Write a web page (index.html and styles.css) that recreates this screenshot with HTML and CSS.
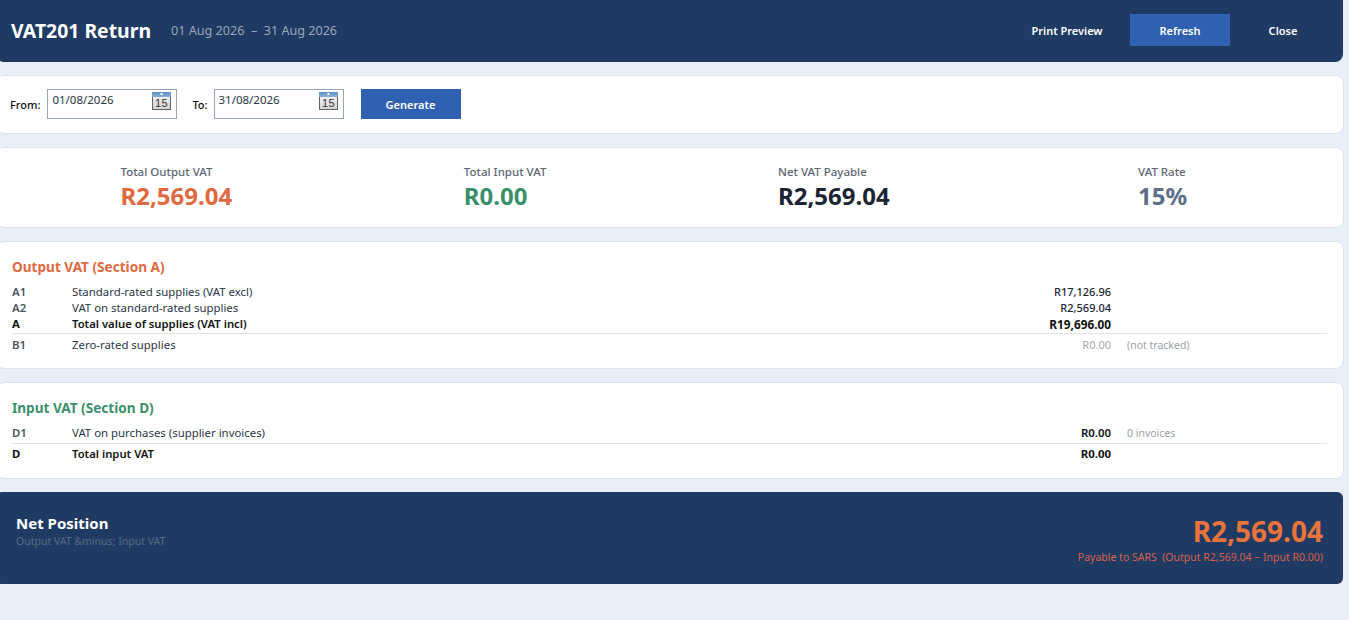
FILE: index.html
```html
<!DOCTYPE html>
<html lang="en">
<head>
<meta charset="utf-8">
<title>VAT201 Return</title>
<link rel="stylesheet" href="styles.css">
</head>
<body>
<main class="page">
  <header class="topbar">
    <h1 class="title">VAT201 Return</h1>
    <span class="period">01 Aug 2026 &nbsp;–&nbsp; 31 Aug 2026</span>
    <nav class="actions">
      <button class="btn btn-ghost btn-print">Print Preview</button>
      <button class="btn btn-primary">Refresh</button>
      <button class="btn btn-ghost btn-close">Close</button>
    </nav>
  </header>

  <section class="card filter">
    <label class="flabel">From:</label>
    <div class="dateinput">
      <span class="dateval">01/08/2026</span>
      <svg class="cal" viewBox="0 0 19 18" width="19" height="18" aria-hidden="true"><defs><linearGradient id="calbody" x1="0" y1="0" x2="0" y2="1"><stop offset="0" stop-color="#fafafa"/><stop offset="1" stop-color="#d2d2d2"/></linearGradient><linearGradient id="calbar" x1="0" y1="0" x2="0" y2="1"><stop offset="0" stop-color="#5b90c6"/><stop offset="1" stop-color="#8db0d2"/></linearGradient></defs><rect x="0.5" y="0.5" width="18" height="17" fill="url(#calbody)" stroke="#5f6368"/><rect x="0" y="0" width="19" height="5" fill="url(#calbar)"/><rect x="8.5" y="1" width="2" height="2" fill="#fff"/><text x="9.5" y="15.4" class="calnum">15</text></svg>
    </div>
    <label class="flabel flabel-to">To:</label>
    <div class="dateinput">
      <span class="dateval">31/08/2026</span>
      <svg class="cal" viewBox="0 0 19 18" width="19" height="18" aria-hidden="true"><rect x="0.5" y="0.5" width="18" height="17" fill="url(#calbody)" stroke="#5f6368"/><rect x="0" y="0" width="19" height="5" fill="url(#calbar)"/><rect x="8.5" y="1" width="2" height="2" fill="#fff"/><text x="9.5" y="15.4" class="calnum">15</text></svg>
    </div>
    <button class="btn btn-primary btn-generate">Generate</button>
  </section>

  <section class="card stats">
    <div class="stat"><div class="statin"><div class="statlabel">Total Output VAT</div><div class="statval c-orange">R2,569.04</div></div></div>
    <div class="stat"><div class="statin"><div class="statlabel">Total Input VAT</div><div class="statval c-green">R0.00</div></div></div>
    <div class="stat"><div class="statin"><div class="statlabel">Net VAT Payable</div><div class="statval c-dark">R2,569.04</div></div></div>
    <div class="stat"><div class="statin"><div class="statlabel">VAT Rate</div><div class="statval c-slate">15%</div></div></div>
  </section>

  <section class="card section section-a">
    <h2 class="sectitle c-orange">Output VAT (Section A)</h2>
    <div class="row"><span class="code">A1</span><span class="desc">Standard-rated supplies (VAT excl)</span><span class="amt">R17,126.96</span><span class="note"></span></div>
    <div class="row"><span class="code">A2</span><span class="desc">VAT on standard-rated supplies</span><span class="amt">R2,569.04</span><span class="note"></span></div>
    <div class="row row-total row-rule"><span class="code">A</span><span class="desc">Total value of supplies (VAT incl)</span><span class="amt">R19,696.00</span><span class="note"></span></div>
    <div class="row row-after"><span class="code">B1</span><span class="desc">Zero-rated supplies</span><span class="amt amt-muted">R0.00</span><span class="note">(not tracked)</span></div>
  </section>

  <section class="card section section-d">
    <h2 class="sectitle c-green">Input VAT (Section D)</h2>
    <div class="row row-rule"><span class="code">D1</span><span class="desc">VAT on purchases (supplier invoices)</span><span class="amt amt-strong">R0.00</span><span class="note">0 invoices</span></div>
    <div class="row row-total row-last"><span class="code">D</span><span class="desc">Total input VAT</span><span class="amt">R0.00</span><span class="note"></span></div>
  </section>

  <section class="netbar">
    <div class="netleft">
      <div class="nettitle">Net Position</div>
      <div class="netsub">Output VAT &amp;minus; Input VAT</div>
    </div>
    <div class="netright">
      <div class="netamt">R2,569.04</div>
      <div class="netnote">Payable to SARS &nbsp;(Output R2,569.04 − Input R0.00)</div>
    </div>
  </section>
</main>
</body>
</html>
```
FILE: styles.css
```css
* { box-sizing: border-box; }
html, body { margin: 0; height: 100%; overflow: hidden; }
body { background: #e8eff8; font-family: "Noto Sans", "Open Sans", sans-serif; color: #1a2433; font-size: 11px; }
.page { width: 1348px; margin-left: -4px; display: flex; flex-direction: column; gap: 13px; }

.topbar { height: 62px; margin-right: 1px; background: #1f3a63; border-radius: 0 0 8px 8px; display: flex; align-items: center; padding: 0 10px 2px 15px; color: #fff; }
.title { margin: 0; font-size: 19.4px; font-weight: 700; }
.period { margin-left: 20px; font-size: 12.6px; color: #9aa7b8; }
.actions { margin-left: auto; display: flex; align-items: center; }
.btn { border: 0; font-family: inherit; font-size: 11px; font-weight: 600; color: #fff; height: 32px; width: 100px; padding: 0; background: transparent; }
.btn-primary { background: #2f60b1; }
.btn-print { margin-right: 13px; }
.btn-close { margin-left: 3px; }

.card { background: #fff; border: 1px solid #dbe3ee; border-radius: 8px; }

.filter { height: 59px; display: flex; align-items: center; padding: 0 13px 1px; }
.flabel { font-size: 11px; font-weight: 500; color: #111; margin-right: 7px; }
.flabel-to { margin-left: 15px; margin-right: 6px; }
.dateinput { width: 130px; height: 30px; border: 1px solid #98a6b4; display: flex; justify-content: space-between; padding: 1px 5px 0 4px; background: #fff; }
.dateval { font-size: 11.5px; color: #2a3646; line-height: 18px; }
.cal { margin-top: 1px; }
.calnum { font-family: "Liberation Sans", sans-serif; font-size: 11px; text-anchor: middle; fill: #333; letter-spacing: 0.4px; }
.btn-generate { margin-left: 17px; height: 30px; }

.stats { height: 81px; display: grid; grid-template-columns: repeat(4, 1fr); padding: 1px 16px 0 15px; align-items: center; }
.stat { display: flex; justify-content: center; }
.statlabel { font-size: 11.5px; font-weight: 500; color: #5d6673; line-height: 15px; }
.statval { font-size: 24px; font-weight: 700; line-height: 33px; }
.c-orange { color: #e0693f; }
.c-green { color: #3a8f6c; }
.c-dark { color: #1a2433; }
.c-slate { color: #5b7088; }

.section { padding: 0 16px 0 15px; }
.section-a { height: 128px; padding-top: 16px; }
.section-d { height: 97px; padding-top: 16px; }
.sectitle { margin: 0 0 8px; font-size: 13.6px; font-weight: 700; line-height: 18px; }
.row { display: grid; grid-template-columns: 60px 1fr 110px 216px; font-size: 11.4px; line-height: 16px; color: #2a3646; }
.code { font-weight: 600; color: #4a5463; }
.amt { text-align: right; font-weight: 500; font-size: 11px; color: #1a2433; }
.amt-muted { color: #a8a8a8; font-weight: 400; }
.amt-strong { color: #111; font-weight: 600; font-size: 11.4px; }
.note { padding-left: 16px; color: #9aa1aa; font-size: 10.5px; }
.row-total { font-weight: 600; color: #111; font-size: 11.3px; }
.row-total .code { color: #111; font-weight: 700; }
.row-total .amt { color: #111; font-weight: 700; font-size: 11.8px; }
.row-rule { border-bottom: 1px solid #dfe4ea; padding-bottom: 1px; }
.section-d .row-rule { padding-bottom: 2px; }
.row-after { padding-top: 3px; }
.row-last { padding-top: 2px; }
.row-last .amt { font-size: 11.4px; }

.netbar { height: 92px; margin-right: 1px; background: #1f3a63; border-radius: 6px; display: flex; justify-content: space-between; padding: 0 20px; color: #fff; }
.netleft { padding-top: 21px; }
.nettitle { font-size: 15px; font-weight: 700; line-height: 20px; }
.netsub { font-size: 10.5px; color: #566a85; line-height: 16px; }
.netright { text-align: right; padding-top: 21px; }
.netamt { font-size: 28px; font-weight: 700; color: #e9733a; line-height: 36px; }
.netnote { font-size: 10.5px; color: #d9614a; line-height: 17px; }
```
